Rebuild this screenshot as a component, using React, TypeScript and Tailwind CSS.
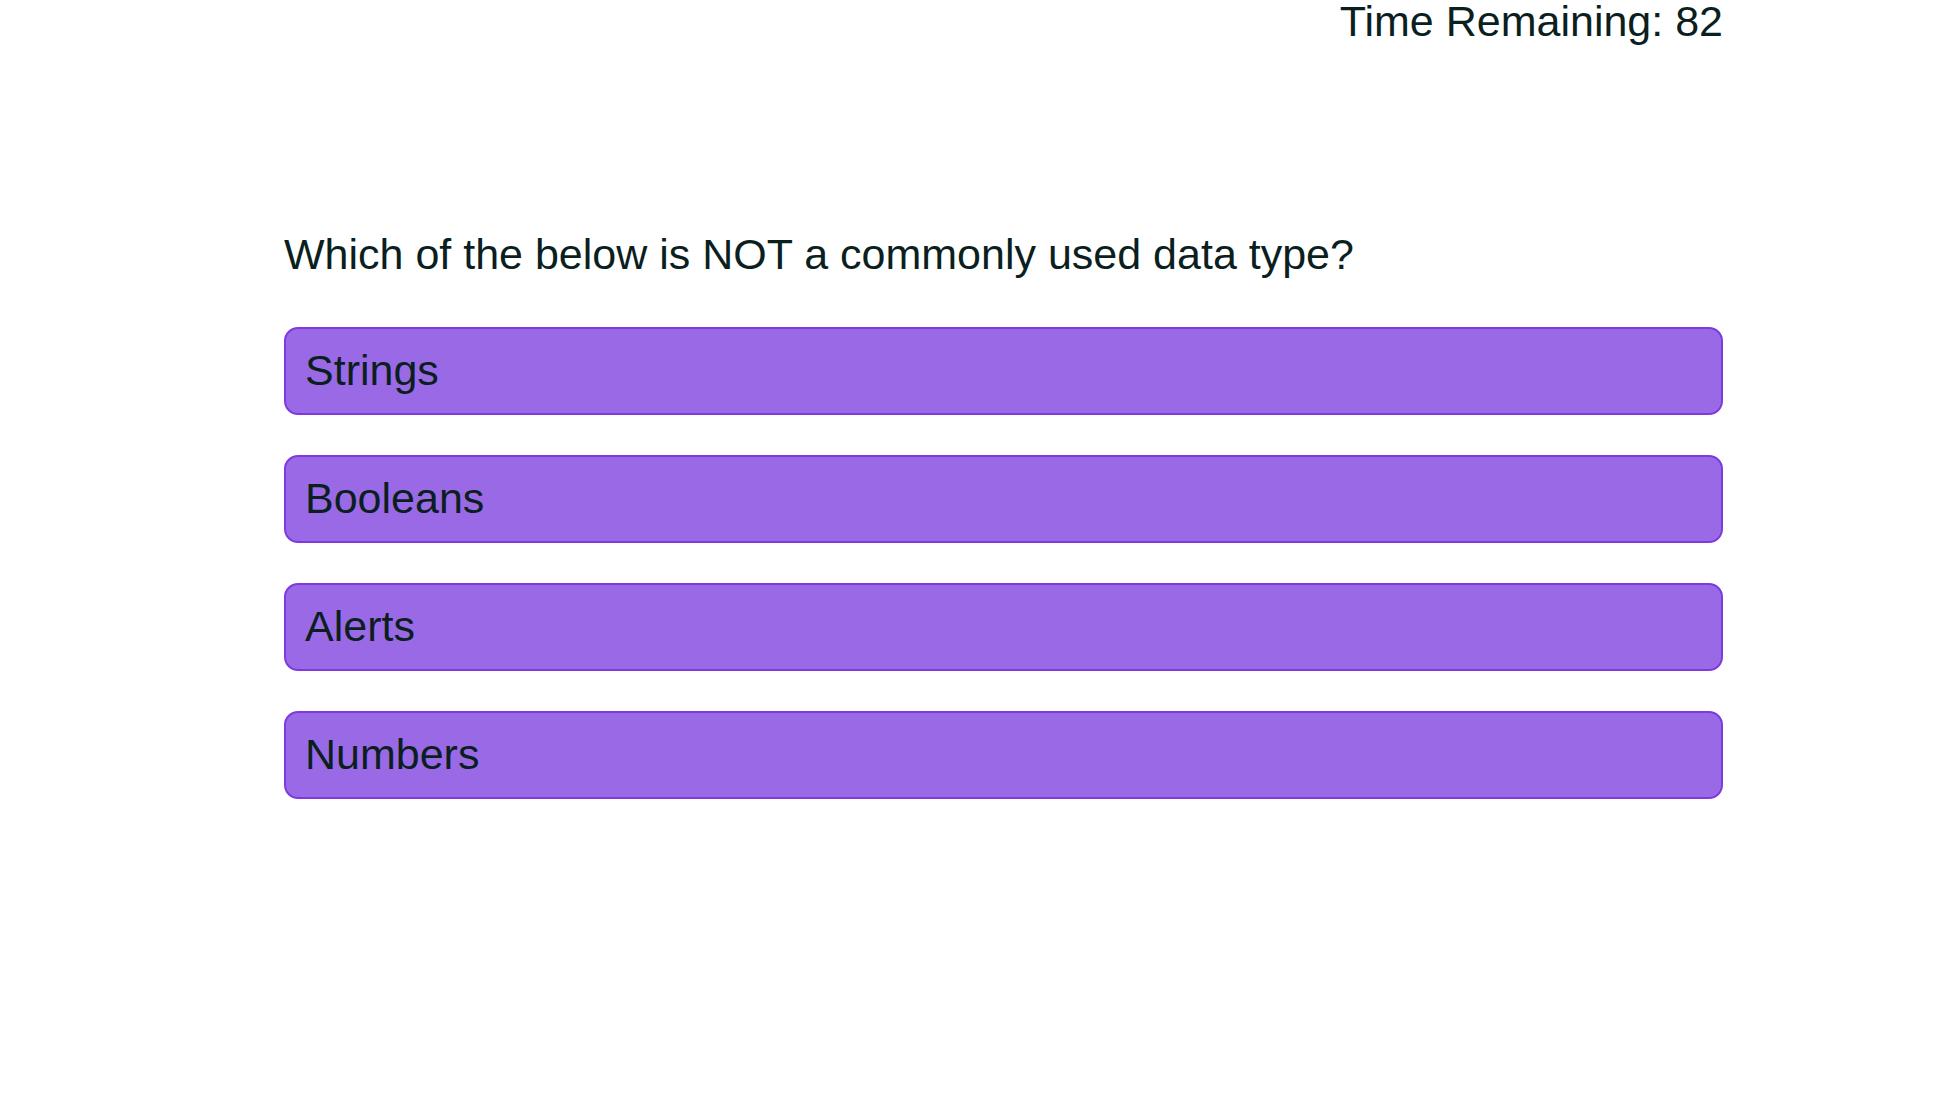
const choices = ["Strings", "Booleans", "Alerts", "Numbers"];

export default function App() {
  return (
    <div className="min-h-screen bg-white text-[#0b1f1f] font-['Liberation_Sans',Arial,sans-serif]">
      <div className="ml-[284px] w-[1439px]">
        <header className="flex justify-end">
          <p className="text-[43px] leading-none">Time Remaining: 82</p>
        </header>

        <main className="mt-[187px]">
          <h1 className="text-[43px] leading-[1.15]">Which of the below is NOT a commonly used data type?</h1>
          <div className="mt-[48px] flex flex-col gap-[40px]">
            {choices.map((c) => (
              <button
                key={c}
                className="h-[88px] w-full rounded-[14px] border-2 border-[#7c3ae0] bg-[#9a6ae6] px-[19px] pb-[2px] text-left text-[43px] leading-[1.15]"
              >
                {c}
              </button>
            ))}
          </div>
        </main>
      </div>
    </div>
  );
}
